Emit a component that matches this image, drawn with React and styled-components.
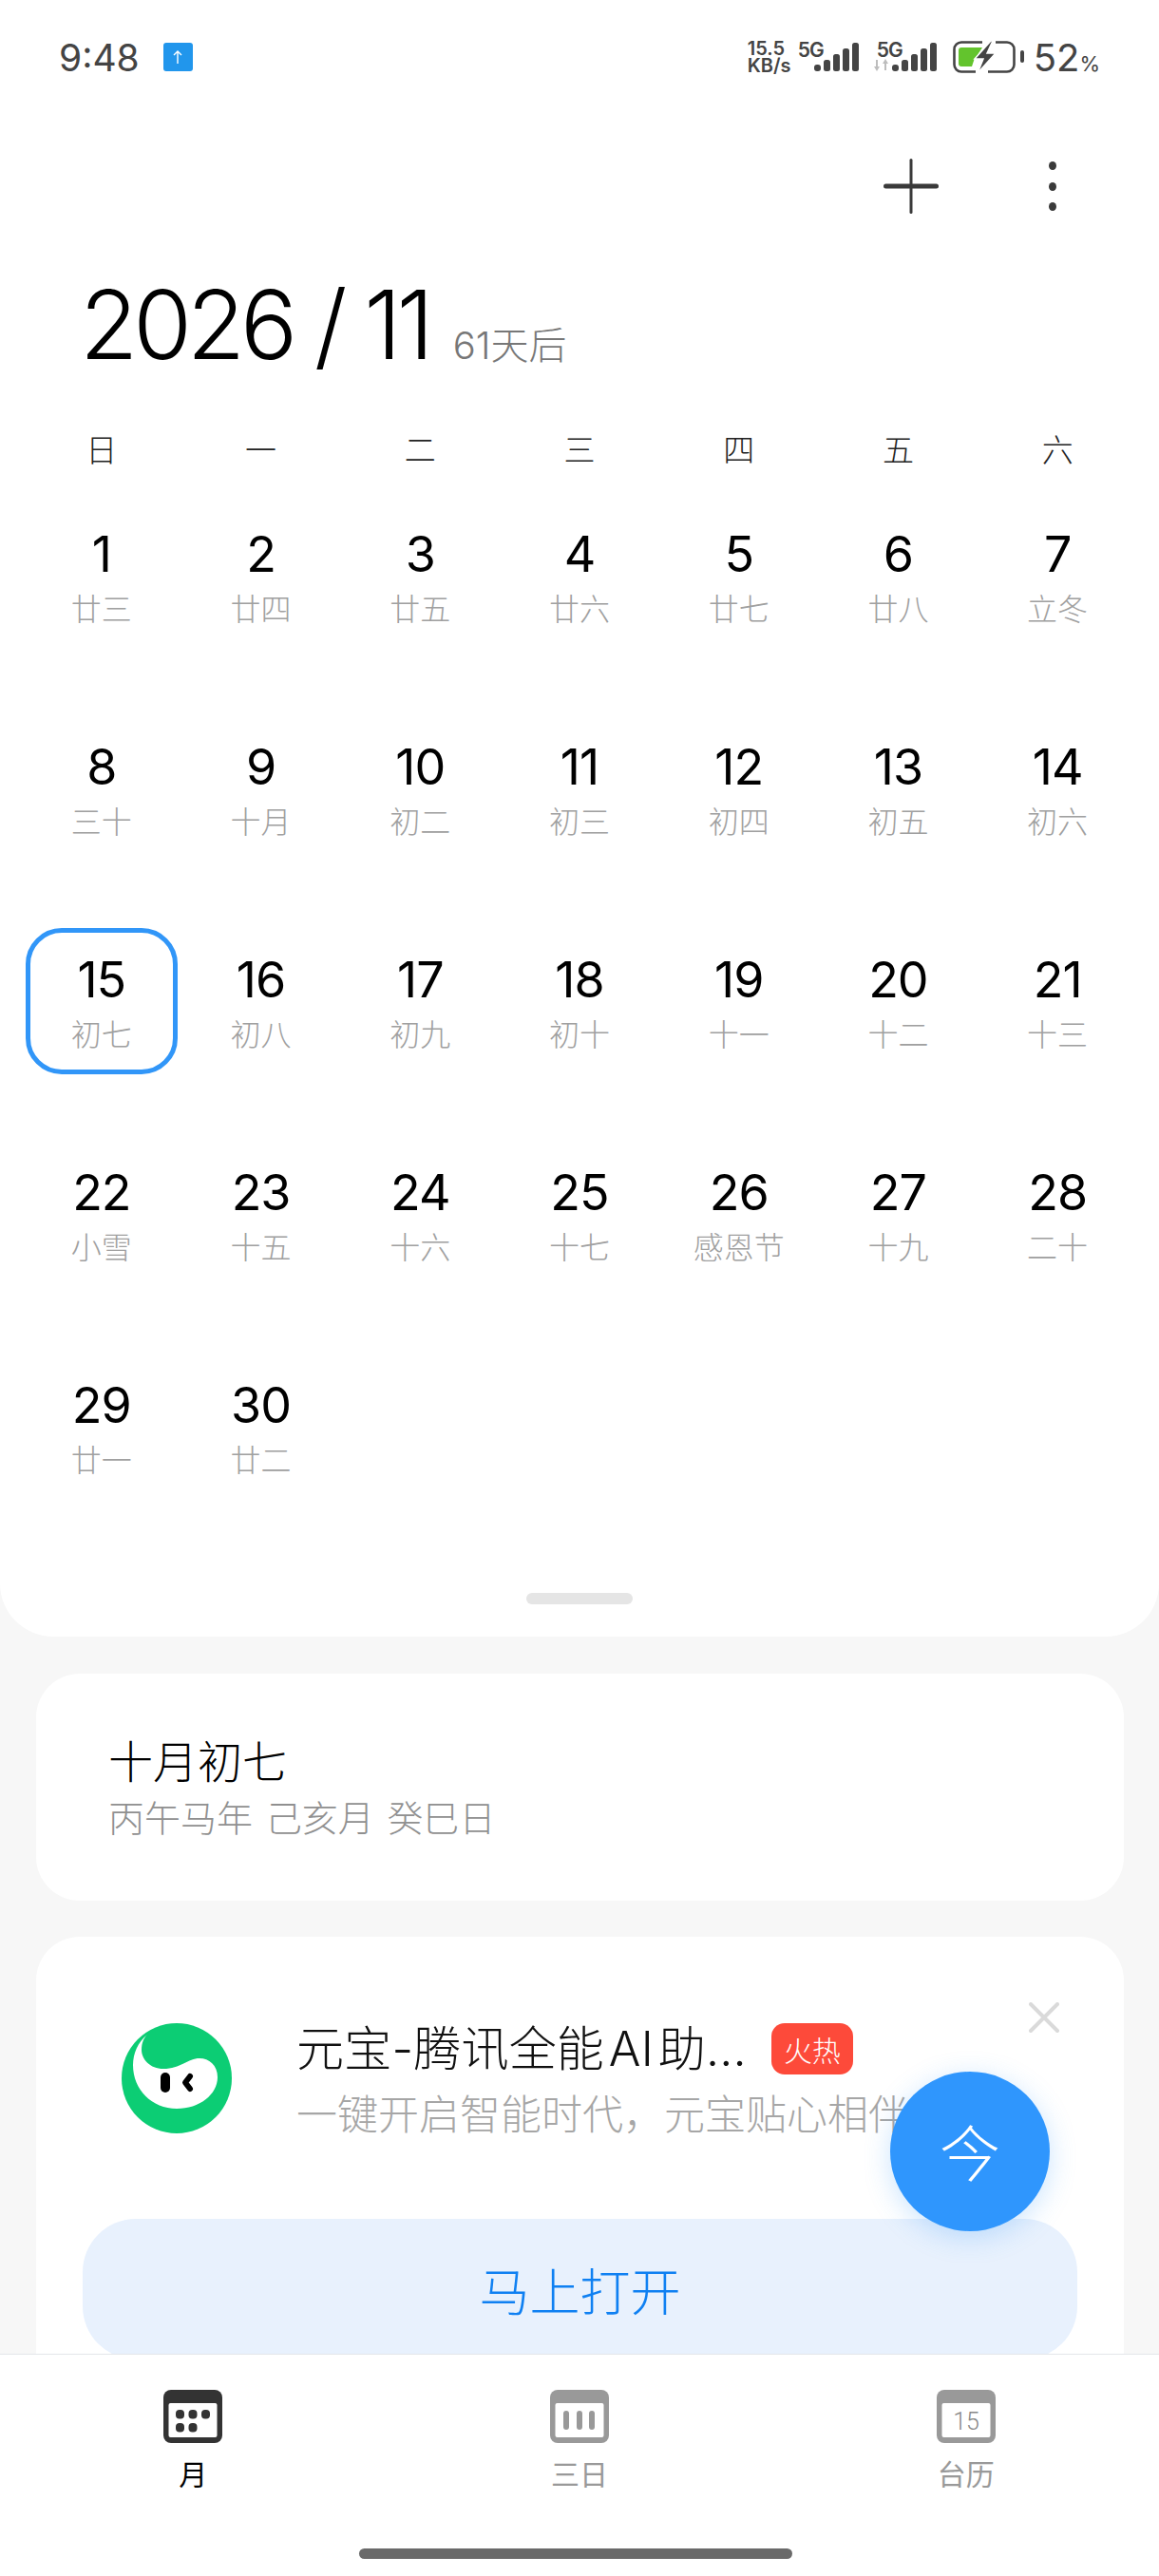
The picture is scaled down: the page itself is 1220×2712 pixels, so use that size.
import styled, { createGlobalStyle } from 'styled-components';

const GlobalStyle = createGlobalStyle`
  html, body { margin: 0; padding: 0; background: #f7f7f7; }
  body { font-family: Inter, "Noto Sans CJK SC", sans-serif; }
  * { box-sizing: border-box; }
`;

const weekDays = ['日', '一', '二', '三', '四', '五', '六'];

const days = [
  ['1', '廿三'], ['2', '廿四'], ['3', '廿五'], ['4', '廿六'], ['5', '廿七'], ['6', '廿八'], ['7', '立冬'],
  ['8', '三十'], ['9', '十月'], ['10', '初二'], ['11', '初三'], ['12', '初四'], ['13', '初五'], ['14', '初六'],
  ['15', '初七'], ['16', '初八'], ['17', '初九'], ['18', '初十'], ['19', '十一'], ['20', '十二'], ['21', '十三'],
  ['22', '小雪'], ['23', '十五'], ['24', '十六'], ['25', '十七'], ['26', '感恩节'], ['27', '十九'], ['28', '二十'],
  ['29', '廿一'], ['30', '廿二'],
];

const App = () => {
  return (
    <>
      <GlobalStyle />
      <Page>
        <TopPanel>
          <StatusBar>
            <StatusLeft>
              <Clock>9:48</Clock>
              <UploadBadge>
                <svg width="14" height="16" viewBox="0 0 14 16" fill="none" stroke="#fff" strokeWidth="1.4">
                  <path d="M7 15V2M3 6l4-4 4 4" />
                </svg>
              </UploadBadge>
            </StatusLeft>
            <StatusRight>
              <Speed>
                <span>15.5</span>
                <span>KB/s</span>
              </Speed>
              <SignalGroup>
                <NetLabel>5G</NetLabel>
                <SignalBars />
              </SignalGroup>
              <SignalGroup $second>
                <NetLabel $second>5G</NetLabel>
                <svg width="17" height="13" viewBox="0 0 17 13" fill="#bdbdbd">
                  <path d="M1 8h2V1h2v7h2l-3 5zM10 5h2v7h2V5h2l-3-5z" />
                </svg>
                <SignalBars />
              </SignalGroup>
              <BatteryIcon />
              <Percent>52<small>%</small></Percent>
            </StatusRight>
          </StatusBar>

          <Actions>
            <PlusButton>
              <svg width="60" height="60" viewBox="0 0 60 60" fill="#3a3a3a">
                <rect x="1" y="27.5" width="58" height="5" rx="2.5" />
                <rect x="28.5" y="1" width="3" height="58" rx="1.5" />
              </svg>
            </PlusButton>
            <MoreButton>
              <Dot /><Dot /><Dot />
            </MoreButton>
          </Actions>

          <TitleRow>
            <MonthTitle>2026 / 11</MonthTitle>
            <MonthHint>61天后</MonthHint>
          </TitleRow>

          <WeekRow>
            {weekDays.map((d) => <WeekLabel key={d}>{d}</WeekLabel>)}
          </WeekRow>

          <DayGrid>
            {days.map(([num, lunar]) => (
              <DayCell key={num} $selected={num === '15'}>
                <DayNumber>{num}</DayNumber>
                <LunarText>{lunar}</LunarText>
              </DayCell>
            ))}
          </DayGrid>

          <Handle />
        </TopPanel>

        <CardArea>
          <LunarCard>
            <LunarTitle>十月初七</LunarTitle>
            <LunarSub>丙午马年 己亥月 癸巳日</LunarSub>
          </LunarCard>

          <AdCard>
            <CloseIcon>
              <svg width="32" height="32" viewBox="0 0 32 32" stroke="#dadada" strokeWidth="4" strokeLinecap="round">
                <path d="M2 2l28 28M30 2L2 30" />
              </svg>
            </CloseIcon>
            <AdRow>
              <YuanbaoLogo />
              <AdText>
                <AdTitleRow>
                  <AdTitle>元宝-腾讯全能{'\u200A'}AI{'\u200A'}助...</AdTitle>
                  <HotBadge>火热</HotBadge>
                </AdTitleRow>
                <AdSub>一键开启智能时代，元宝贴心相伴</AdSub>
              </AdText>
            </AdRow>
            <OpenButton>马上打开</OpenButton>
          </AdCard>
        </CardArea>

        <TodayFab>今</TodayFab>

        <TabBar>
          <TabItem $active>
            <TabIcon color="#333">
              <g fill="#333">
                <rect x="13" y="21" width="9" height="9.5" rx="4" />
                <rect x="26.5" y="21" width="9" height="9.5" rx="4" />
                <rect x="40" y="21" width="9" height="9.5" rx="4" />
                <rect x="13" y="35" width="9" height="9.5" rx="4" />
                <rect x="26.5" y="35" width="9" height="9.5" rx="4" />
              </g>
            </TabIcon>
            <TabLabel>月</TabLabel>
          </TabItem>
          <TabItem>
            <TabIcon color="#999">
              <g fill="#999">
                <rect x="14" y="22" width="6" height="20" rx="3" />
                <rect x="28" y="22" width="6" height="20" rx="3" />
                <rect x="41" y="22" width="6" height="20" rx="3" />
              </g>
            </TabIcon>
            <TabLabel>三日</TabLabel>
          </TabItem>
          <TabItem>
            <TabIcon color="#999">
              <text x="31" y="42" textAnchor="middle" fontSize="25" fontFamily="Roboto, sans-serif" fontWeight="300" fill="#888">15</text>
            </TabIcon>
            <TabLabel>台历</TabLabel>
          </TabItem>
          <HomeBar />
        </TabBar>
      </Page>
    </>
  );
};

export default App;

const SignalBars = () => (
  <svg width="48" height="30" viewBox="0 0 48 30" fill="#444">
    <rect x="0" y="23" width="7" height="7" rx="3" />
    <rect x="10" y="18" width="7" height="12" rx="2.5" />
    <rect x="20" y="12" width="7" height="18" rx="2.5" />
    <rect x="30" y="6" width="7" height="24" rx="2.5" />
    <rect x="40" y="0" width="7" height="30" rx="2.5" />
  </svg>
);

const BatteryIcon = () => (
  <BatteryWrap>
    <svg width="76" height="34" viewBox="0 0 76 34" fill="none">
      <path d="M31 1.5H9a7.5 7.5 0 0 0-7.5 7.5v16A7.5 7.5 0 0 0 9 32.5h15M45 1.5h12a7.5 7.5 0 0 1 7.5 7.5v16a7.5 7.5 0 0 1-7.5 7.5H37" stroke="#444" strokeWidth="2.6" />
      <path d="M9 7h22l-7 11h-1l-3 9H9a3 3 0 0 1-3-3V10a3 3 0 0 1 3-3z" fill="#63c42d" />
      <path d="M40 0L23 19h9L26 34 45 13h-9l6-13z" fill="#444" stroke="#fff" strokeWidth="1.5" />
      <rect x="71" y="10" width="4" height="13" rx="2" fill="#444" />
    </svg>
  </BatteryWrap>
);

const YuanbaoLogo = () => (
  <LogoWrap>
    <svg width="116" height="116" viewBox="0 0 116 116">
      <circle cx="58" cy="58" r="58" fill="#0ccd74" />
      <path d="M27 12C17 20 12 32 12 44C12 70 32 90 58 90C82 90 101 75 101 57C101 44 92 37 82 37C70 37 62 48 44 48C30 48 21 38 21 28C21 21 23 16 27 12Z" fill="#fff" />
      <rect x="41" y="52" width="10" height="21" rx="5" fill="#000" />
      <path d="M72 56L67 62.5L72 69" fill="none" stroke="#000" strokeWidth="6" strokeLinecap="round" strokeLinejoin="round" />
    </svg>
  </LogoWrap>
);

const TabIcon = ({ color, children }) => (
  <svg width="62" height="56" viewBox="0 0 62 56">
    <rect width="62" height="56" rx="8" fill={color} />
    <rect x="5.5" y="14" width="51" height="36" rx="2" fill="#fff" />
    {children}
  </svg>
);

const Page = styled.div`
  position: relative;
  width: 1220px;
  height: 2712px;
  overflow: hidden;
  display: flex;
  flex-direction: column;
  background: #f7f7f7;
`;

const TopPanel = styled.div`
  flex: none;
  height: 1723px;
  display: flex;
  flex-direction: column;
  background: #fff;
  border-radius: 0 0 56px 56px;
`;

const StatusBar = styled.div`
  height: 120px;
  padding: 0 62px 0 62px;
  display: flex;
  align-items: center;
  justify-content: space-between;
`;

const StatusLeft = styled.div`
  display: flex;
  align-items: center;
  gap: 25px;
`;

const Clock = styled.span`
  font-family: Inter, sans-serif;
  font-size: 39px;
  color: #444;
`;

const UploadBadge = styled.div`
  width: 31px;
  height: 30px;
  border-radius: 3px;
  background: #2196ec;
  display: flex;
  align-items: center;
  justify-content: center;
`;

const StatusRight = styled.div`
  display: flex;
  align-items: center;
  height: 36px;
`;

const Speed = styled.div`
  display: flex;
  flex-direction: column;
  width: 53px;
  font-family: Inter, sans-serif;
  font-size: 20px;
  font-weight: 600;
  line-height: 18px;
  color: #444;
`;

const SignalGroup = styled.div`
  position: relative;
  display: flex;
  align-items: flex-end;
  height: 34px;
  padding-bottom: 2px;
  margin-left: ${(p) => (p.$second ? '14px' : '0')};
  padding-left: ${(p) => (p.$second ? '0' : '17px')};

  svg:last-child { margin-left: ${(p) => (p.$second ? '3px' : '0')}; }
`;

const NetLabel = styled.span`
  position: absolute;
  top: -3px;
  left: ${(p) => (p.$second ? '4px' : '0')};
  font-family: Inter, sans-serif;
  font-size: 21px;
  font-weight: 600;
  letter-spacing: -1px;
  color: #444;
`;

const BatteryWrap = styled.div`
  display: flex;
  margin-left: 16px;
`;

const Percent = styled.span`
  margin-left: 9px;
  font-family: Inter, sans-serif;
  font-size: 40px;
  color: #444;
  white-space: nowrap;

  small { font-size: 22px; }
`;

const Actions = styled.div`
  height: 80px;
  margin-top: 36px;
  padding-right: 108px;
  display: flex;
  align-items: center;
  justify-content: flex-end;
`;

const PlusButton = styled.div`
  display: flex;
  margin-right: 115px;
`;

const MoreButton = styled.div`
  display: flex;
  flex-direction: column;
  gap: 12.5px;
`;

const Dot = styled.span`
  width: 8px;
  height: 9px;
  border-radius: 50%;
  background: #3a3a3a;
`;

const TitleRow = styled.div`
  margin-top: 46px;
  padding-left: 84px;
  display: flex;
  align-items: baseline;
  gap: 25px;
  height: 120px;
`;

const MonthTitle = styled.h1`
  margin: 0;
  font-family: Inter, sans-serif;
  font-size: 100px;
  font-weight: 300;
  letter-spacing: -5.2px;
  line-height: 120px;
  color: #000;
`;

const MonthHint = styled.span`
  font-size: 40px;
  font-weight: 300;
  color: #777;
`;

const WeekRow = styled.div`
  margin-top: 50px;
  padding: 0 23px;
  height: 44px;
  display: grid;
  grid-template-columns: repeat(7, 1fr);
  align-items: center;
`;

const WeekLabel = styled.span`
  text-align: center;
  font-size: 33px;
  font-weight: 300;
  line-height: 44px;
  color: #222;
`;

const DayGrid = styled.div`
  margin-top: 33px;
  padding: 0 23px;
  display: grid;
  grid-template-columns: repeat(7, 1fr);
  grid-auto-rows: 154px;
  row-gap: 70px;
  justify-items: center;
`;

const DayCell = styled.div`
  width: 160px;
  height: 154px;
  padding-top: 24px;
  display: flex;
  flex-direction: column;
  align-items: center;
  border-radius: 38px;
  border: 5px solid ${(p) => (p.$selected ? '#3196f8' : 'transparent')};
`;

const DayNumber = styled.span`
  font-family: Inter, sans-serif;
  font-size: 52px;
  letter-spacing: -1px;
  line-height: 52px;
  color: #000;
`;

const LunarText = styled.span`
  margin-top: 12px;
  font-size: 32px;
  font-weight: 300;
  line-height: 40px;
  color: #a0a0a0;
  white-space: nowrap;
`;

const Handle = styled.div`
  width: 112px;
  height: 12px;
  margin: 98px auto 0;
  border-radius: 6px;
  background: #e5e5e5;
`;

const CardArea = styled.div`
  flex: 1;
  min-height: 0;
  overflow: hidden;
  padding: 39px 37px 0 38px;
  display: flex;
  flex-direction: column;
  gap: 38px;
`;

const LunarCard = styled.div`
  flex: none;
  height: 239px;
  padding: 65px 76px 0;
  border-radius: 46px;
  background: #fff;
`;

const LunarTitle = styled.div`
  font-size: 47px;
  font-weight: 300;
  line-height: 56px;
  color: #000;
`;

const LunarSub = styled.div`
  margin-top: 7px;
  font-size: 38px;
  font-weight: 300;
  word-spacing: 3px;
  line-height: 48px;
  color: #909090;
`;

const AdCard = styled.div`
  position: relative;
  flex: none;
  height: 560px;
  padding: 91px 49px 0;
  border-radius: 46px;
  background: #fff;
`;

const CloseIcon = styled.div`
  position: absolute;
  top: 69px;
  right: 68px;
  display: flex;
`;

const AdRow = styled.div`
  display: flex;
  align-items: flex-start;
`;

const LogoWrap = styled.div`
  flex: none;
  margin-left: 41px;
  display: flex;
`;

const AdText = styled.div`
  margin-left: 68px;
  min-width: 0;
  width: 700px;
`;

const AdTitleRow = styled.div`
  display: flex;
  align-items: center;
  gap: 26px;
`;

const AdTitle = styled.div`
  font-size: 50px;
  font-weight: 300;
  letter-spacing: 0.2px;
  line-height: 54px;
  color: #111;
  white-space: nowrap;
`;

const HotBadge = styled.span`
  width: 86px;
  height: 54px;
  display: flex;
  align-items: center;
  justify-content: center;
  border-radius: 14px;
  background: #fd4a3a;
  color: #fff;
  font-size: 30px;
  font-weight: 300;
`;

const AdSub = styled.div`
  margin-top: 14px;
  font-size: 43px;
  font-weight: 300;
  line-height: 56px;
  color: #a6a6a6;
  white-space: nowrap;
`;

const OpenButton = styled.div`
  margin-top: 82px;
  height: 148px;
  display: flex;
  align-items: center;
  justify-content: center;
  border-radius: 56px;
  background: #e8f1fd;
  color: #0f80f2;
  font-size: 53px;
  font-weight: 300;
`;

const TodayFab = styled.div`
  position: absolute;
  left: 937px;
  top: 2181px;
  width: 168px;
  height: 168px;
  padding-bottom: 4px;
  border-radius: 50%;
  display: flex;
  align-items: center;
  justify-content: center;
  background: #2f96fd;
  box-shadow: 0 6px 28px rgba(47, 150, 253, 0.25);
  color: #fff;
  font-size: 64px;
  font-weight: 300;
  z-index: 2;
`;

const TabBar = styled.div`
  position: relative;
  flex: none;
  height: 234px;
  padding-top: 37px;
  display: grid;
  grid-template-columns: repeat(3, 1fr);
  align-items: start;
  justify-items: center;
  background: #fff;
  border-top: 1px solid #e4e7ea;
`;

const TabItem = styled.div`
  display: flex;
  flex-direction: column;
  align-items: center;
  color: ${(p) => (p.$active ? '#000' : '#999')};

  svg { display: block; }
`;

const TabLabel = styled.span`
  margin-top: 14px;
  font-size: 30px;
  line-height: 38px;
`;

const HomeBar = styled.div`
  position: absolute;
  left: 378px;
  bottom: 18px;
  width: 456px;
  height: 11px;
  border-radius: 6px;
  background: #6a6a6a;
`;
